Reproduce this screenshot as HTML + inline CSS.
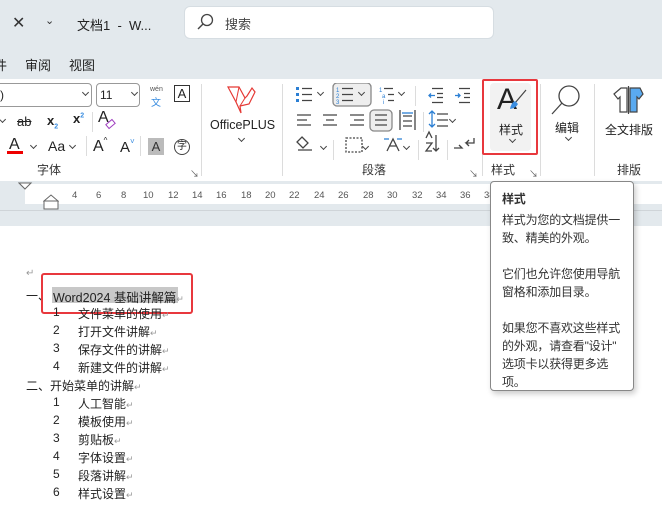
<!DOCTYPE html>
<html><head><meta charset="utf-8"><style>
*{margin:0;padding:0;box-sizing:border-box}
body{width:662px;height:505px;overflow:hidden;background:#e3e9ed;font-family:"Liberation Sans","Noto Sans CJK SC",sans-serif;color:#222;position:relative}
.a{position:absolute;white-space:nowrap}
.t{font-size:13px}
.s{font-size:12px}
.lab{font-size:12px;color:#333}
.sep{position:absolute;width:1px;background:#dcdcdc}
.chev{position:absolute;width:5px;height:5px;border-right:1.2px solid #444;border-bottom:1.2px solid #444;transform:rotate(45deg)}
.doc{font-size:12px;color:#222}
.rl{font-size:9.5px;color:#555;position:absolute;top:190px}
</style></head><body>
<!-- title bar -->
<div class="a" style="left:12px;top:13px;font-size:16px;color:#333">✕</div>
<div class="a" style="left:45px;top:14px;font-size:11px;color:#333">⌄</div>
<div class="a t" style="left:77px;top:15px;color:#222">文档1&nbsp; -&nbsp; W...</div>
<div class="a" style="left:184px;top:6px;width:310px;height:33px;background:#fff;border-radius:6px;border:1px solid #d6dde2"></div>
<svg class="a" style="left:196px;top:13px" width="18" height="18"><circle cx="11" cy="7" r="5.5" fill="none" stroke="#444" stroke-width="1.3"/><line x1="7" y1="11" x2="2" y2="16" stroke="#444" stroke-width="1.4"/></svg>
<div class="a t" style="left:225px;top:14px;color:#444">搜索</div>
<!-- tabs -->
<div class="a t" style="left:-6px;top:55px">件</div>
<div class="a t" style="left:25px;top:55px">审阅</div>
<div class="a t" style="left:69px;top:55px">视图</div>
<!-- ribbon -->
<div class="a" style="left:0;top:79px;width:662px;height:102px;background:#fff"></div>
<!-- font group -->
<div class="a" style="left:-8px;top:83px;width:100px;height:24px;border:1px solid #999;border-radius:4px;background:#fff"></div>
<div class="a s" style="left:0;top:88px">)</div>
<div class="chev" style="left:83px;top:90px"></div>
<div class="a" style="left:96px;top:83px;width:44px;height:24px;border:1px solid #999;border-radius:4px"></div>
<div class="a s" style="left:100px;top:88px">11</div>
<div class="chev" style="left:132px;top:90px"></div>
<div class="a" style="left:150px;top:86px;font-size:7px;color:#555">wén</div>
<div class="a" style="left:151px;top:94px;font-size:10px;color:#3a8de0">文</div>
<div class="a" style="left:174px;top:85px;width:16px;height:17px;border:1.3px solid #333;font-size:13px;text-align:center;line-height:15px">A</div>
<div class="chev" style="left:0px;top:117px"></div>
<div class="a" style="left:17px;top:114px;font-size:13px;text-decoration:line-through">ab</div>
<div class="a" style="left:47px;top:113px;font-size:13px;font-weight:bold">x<sub style="font-size:7px;color:#3a8de0">2</sub></div>
<div class="a" style="left:73px;top:111px;font-size:13px;font-weight:bold">x<sup style="font-size:7px;color:#3a8de0">2</sup></div>
<div class="sep" style="left:92px;top:112px;height:20px"></div>
<div class="a" style="left:98px;top:109px;font-size:16px">A</div>
<div class="a" style="left:106px;top:121px;width:9px;height:6px;border:1.4px solid #a040c0;transform:rotate(-40deg)"></div>
<div class="a" style="left:9px;top:136px;font-size:16px">A</div>
<div class="a" style="left:7px;top:151px;width:16px;height:3px;background:#e00"></div>
<div class="chev" style="left:31px;top:143px"></div>
<div class="a" style="left:48px;top:138px;font-size:14px">Aa</div>
<div class="chev" style="left:70px;top:143px"></div>
<div class="sep" style="left:86px;top:136px;height:20px"></div>
<div class="a" style="left:93px;top:136px;font-size:16px">A<span style="font-size:8px;vertical-align:8px">^</span></div>
<div class="a" style="left:120px;top:137px;font-size:15px">A<span style="font-size:8px;color:#3a8de0;vertical-align:8px">˅</span></div>
<div class="sep" style="left:140px;top:136px;height:20px"></div>
<div class="a" style="left:148px;top:138px;width:16px;height:17px;background:#bbb;font-size:13px;text-align:center;line-height:17px;color:#333">A</div>
<div class="a" style="left:174px;top:139px;width:16px;height:16px;border:1.2px solid #444;border-radius:50%;font-size:10px;text-align:center;line-height:14px">字</div>
<div class="a lab" style="left:37px;top:161px">字体</div>
<div class="a" style="left:190px;top:167px;font-size:9px;color:#555">↘</div>
<div class="sep" style="left:201px;top:84px;height:92px"></div>
<!-- OfficePLUS -->
<svg class="a" style="left:225px;top:84px" width="32" height="32"><path d="M3 3 L14 3 L20 14 L22 12 L27 4 L30 8 L24 20 L15 22 L16 29 L11 18 Z" fill="#fff" stroke="#e53935" stroke-width="1.2"/><path d="M14 3 L11 18 M20 14 L15 22" stroke="#e53935" stroke-width="1"/></svg>
<div class="a" style="left:210px;top:118px;font-size:12.5px">OfficePLUS</div>
<div class="chev" style="left:239px;top:136px"></div>
<div class="sep" style="left:282px;top:84px;height:92px"></div>
<!-- paragraph group -->
<svg class="a" style="left:290px;top:83px" width="200" height="80" fill="none" stroke="#444" stroke-width="1.3">
 <rect x="6" y="4" width="3" height="3" fill="#2b7fd4" stroke="none"/><rect x="6" y="10" width="3" height="3" fill="#2b7fd4" stroke="none"/><rect x="6" y="16" width="3" height="3" fill="#2b7fd4" stroke="none"/>
 <path d="M12 5.5h10M12 11.5h10M12 17.5h10"/>
 <rect x="43" y="0" width="38" height="23" rx="4" fill="#eee" stroke="#888"/>
 <text x="46" y="9" font-size="6" fill="#2b7fd4" stroke="none">1</text><text x="46" y="15" font-size="6" fill="#2b7fd4" stroke="none">2</text><text x="46" y="21" font-size="6" fill="#2b7fd4" stroke="none">3</text>
 <path d="M52 5.5h11M52 11.5h11M52 17.5h11"/>
 <text x="89" y="9" font-size="6" fill="#2b7fd4" stroke="none">1</text><text x="92" y="15" font-size="6" fill="#2b7fd4" stroke="none">a</text><text x="93" y="21" font-size="6" fill="#2b7fd4" stroke="none">i</text>
 <path d="M94 5.5h9M98 11.5h6M98 17.5h6"/>
 <path d="M142 5.5h11M147 10.5h6M147 14.5h6M142 19.5h11"/><path d="M145 12.5h-5M141 10.5l-2 2 2 2" stroke="#2b7fd4"/>
 <path d="M169 5.5h11M174 10.5h6M174 14.5h6M169 19.5h11"/><path d="M165 12.5h5M168 10.5l2 2-2 2" stroke="#2b7fd4"/>
 <path d="M7 32h14M7 37h10M7 42h14"/>
 <path d="M33 32h14M36 37h8M33 42h14"/>
 <path d="M60 32h14M64 37h10M60 42h14"/>
 <rect x="80" y="27" width="22" height="21" rx="4" fill="#eee" stroke="#888"/>
 <path d="M85 32h12M85 37h12M85 42h12"/>
 <path d="M110 27v20M125 27v20M113 33h9M113 38h9M113 43h9"/><path d="M112 30h11" stroke="#2b7fd4"/>
 <path d="M147 31h11M147 37h11M147 43h11"/><path d="M142 28v16M139 31l3-3 3 3M139 41l3 3 3-3" stroke="#2b7fd4"/>
 <path d="M12 54l6 6-5 5-6-6z"/><path d="M8 67h14" stroke="#888" stroke-width="2"/>
 <rect x="56" y="55" width="16" height="14" stroke-dasharray="2 1.5"/>
 <path d="M97 68l6-12 6 12M99 63h8"/><path d="M94 56h5M112 56h-5" stroke="#2b7fd4"/>
 <path d="M136 55l3-6 3 6M136 60h6l-6 8h6M146 52v16M143 65l3 3 3-3"/>
 <path d="M164 65h8l-3-3M184 55v5h-8l3 3M176 60l3-3"/>
</svg>
<div class="chev" style="left:318px;top:90px"></div>
<div class="chev" style="left:359px;top:90px"></div>
<div class="chev" style="left:399px;top:90px"></div>
<div class="chev" style="left:450px;top:117px"></div>
<div class="chev" style="left:321px;top:144px"></div>
<div class="chev" style="left:363px;top:144px"></div>
<div class="chev" style="left:404px;top:144px"></div>
<div class="sep" style="left:415px;top:86px;height:20px"></div>
<div class="sep" style="left:423px;top:112px;height:20px"></div>
<div class="sep" style="left:333px;top:140px;height:20px"></div>
<div class="sep" style="left:418px;top:140px;height:20px"></div>
<div class="sep" style="left:447px;top:140px;height:20px"></div>
<div class="a lab" style="left:362px;top:161px">段落</div>
<div class="a" style="left:469px;top:167px;font-size:9px;color:#555">↘</div>
<div class="sep" style="left:482px;top:84px;height:92px"></div>
<!-- styles -->
<div class="a" style="left:490px;top:83px;width:41px;height:68px;background:#f2f2f2;border-radius:4px"></div>
<div class="a" style="left:482px;top:79px;width:56px;height:76px;border:2px solid #e8383d;border-radius:2px"></div>
<div class="a" style="left:497px;top:83px;font-size:30px;font-family:'Liberation Sans',sans-serif;font-weight:300">A</div>
<svg class="a" style="left:505px;top:88px" width="24" height="24"><path d="M21 2 L10 15" stroke="#444" stroke-width="1.2"/><path d="M10 13 q-4 2 -5 8 q6 -1 8 -5 z" fill="#3a8de0"/></svg>
<div class="a s" style="left:499px;top:121px">样式</div>
<div class="chev" style="left:510px;top:137px"></div>
<div class="a lab" style="left:491px;top:161px">样式</div>
<div class="a" style="left:529px;top:167px;font-size:9px;color:#555">↘</div>
<div class="sep" style="left:540px;top:84px;height:92px"></div>
<!-- edit -->
<svg class="a" style="left:550px;top:83px" width="36" height="34"><circle cx="19" cy="13" r="10" fill="none" stroke="#444" stroke-width="1.3"/><line x1="12" y1="20" x2="2" y2="31" stroke="#444" stroke-width="1.3"/></svg>
<div class="a s" style="left:555px;top:119px">编辑</div>
<div class="chev" style="left:566px;top:135px"></div>
<div class="sep" style="left:594px;top:84px;height:92px"></div>
<!-- layout -->
<svg class="a" style="left:612px;top:86px" width="32" height="28"><path d="M9 2 L2 8 L6 13 L8 11 V26 H15 V2 Z" fill="#fff" stroke="#444" stroke-width="1.2"/><path d="M18 2 L28 2 L31 8 L27 13 L25 11 V26 H18 Z" fill="#5aaaf0" stroke="#444" stroke-width="1.2"/><line x1="16.5" y1="0" x2="16.5" y2="28" stroke="#444" stroke-width="1.2"/></svg>
<div class="a s" style="left:605px;top:121px">全文排版</div>
<div class="a lab" style="left:617px;top:161px">排版</div>
<!-- ruler -->
<div class="a" style="left:25px;top:184px;width:640px;height:20px;background:#fff"></div>
<div class="a" style="left:0;top:210px;width:662px;height:1px;background:#cfd4d8"></div>
<svg class="a" style="left:18px;top:182px" width="20" height="12"><path d="M1 1h12l-6 6z" fill="#fff" stroke="#666"/></svg>
<svg class="a" style="left:43px;top:193px" width="16" height="18"><path d="M1 8l7-6 7 6z M1 8h14v8H1z" fill="#fff" stroke="#666"/></svg>
<div class="rl" style="left:72px">4</div><div class="rl" style="left:96px">6</div><div class="rl" style="left:121px">8</div>
<div class="rl" style="left:143px">10</div><div class="rl" style="left:168px">12</div><div class="rl" style="left:192px">14</div>
<div class="rl" style="left:216px">16</div><div class="rl" style="left:241px">18</div><div class="rl" style="left:265px">20</div>
<div class="rl" style="left:289px">22</div><div class="rl" style="left:314px">24</div><div class="rl" style="left:338px">26</div>
<div class="rl" style="left:363px">28</div><div class="rl" style="left:387px">30</div><div class="rl" style="left:412px">32</div>
<div class="rl" style="left:436px">34</div><div class="rl" style="left:460px">36</div><div class="rl" style="left:484px">38</div>
<!-- document -->
<div class="a" style="left:0;top:226px;width:662px;height:279px;background:#fff"></div>
<div class="a doc" style="left:26px;top:268px;color:#999;font-size:10px">↵</div>
<div class="a doc" style="left:26px;top:287px">一、</div>
<div class="a" style="left:52px;top:287px;width:126px;height:16px;background:#c8c8c8"></div>
<div class="a doc" style="left:53px;top:287px;font-size:12.5px">Word2024 基础讲解篇<span style="color:#999;font-size:9px">↵</span></div>
<div class="a" style="left:41px;top:273px;width:152px;height:41px;border:2px solid #e8383d;border-radius:3px"></div>
<div class="a doc" style="left:53px;top:305px">1</div><div class="a doc" style="left:78px;top:305px">文件菜单的使用<span style="color:#999;font-size:9px">↵</span></div>
<div class="a doc" style="left:53px;top:323px">2</div><div class="a doc" style="left:78px;top:323px">打开文件讲解<span style="color:#999;font-size:9px">↵</span></div>
<div class="a doc" style="left:53px;top:341px">3</div><div class="a doc" style="left:78px;top:341px">保存文件的讲解<span style="color:#999;font-size:9px">↵</span></div>
<div class="a doc" style="left:53px;top:359px">4</div><div class="a doc" style="left:78px;top:359px">新建文件的讲解<span style="color:#999;font-size:9px">↵</span></div>
<div class="a doc" style="left:26px;top:377px">二、开始菜单的讲解<span style="color:#999;font-size:9px">↵</span></div>
<div class="a doc" style="left:53px;top:395px">1</div><div class="a doc" style="left:78px;top:395px">人工智能<span style="color:#999;font-size:9px">↵</span></div>
<div class="a doc" style="left:53px;top:413px">2</div><div class="a doc" style="left:78px;top:413px">模板使用<span style="color:#999;font-size:9px">↵</span></div>
<div class="a doc" style="left:53px;top:431px">3</div><div class="a doc" style="left:78px;top:431px">剪贴板<span style="color:#999;font-size:9px">↵</span></div>
<div class="a doc" style="left:53px;top:449px">4</div><div class="a doc" style="left:78px;top:449px">字体设置<span style="color:#999;font-size:9px">↵</span></div>
<div class="a doc" style="left:53px;top:467px">5</div><div class="a doc" style="left:78px;top:467px">段落讲解<span style="color:#999;font-size:9px">↵</span></div>
<div class="a doc" style="left:53px;top:485px">6</div><div class="a doc" style="left:78px;top:485px">样式设置<span style="color:#999;font-size:9px">↵</span></div>
<!-- tooltip -->
<div class="a" style="left:490px;top:181px;width:144px;height:210px;background:#fff;border:1px solid #888;border-radius:4px;box-shadow:2px 3px 6px rgba(0,0,0,.2);padding:8px 0 0 11px;font-size:12px;line-height:18px;color:#333;letter-spacing:-0.2px">
<div style="font-weight:bold;margin-bottom:3px">样式</div>
<div>样式为您的文档提供一<br>致、精美的外观。</div>
<div style="margin-top:18px">它们也允许您使用导航<br>窗格和添加目录。</div>
<div style="margin-top:18px">如果您不喜欢这些样式<br>的外观，请查看"设计"<br>选项卡以获得更多选<br>项。</div>
</div>
</body></html>
